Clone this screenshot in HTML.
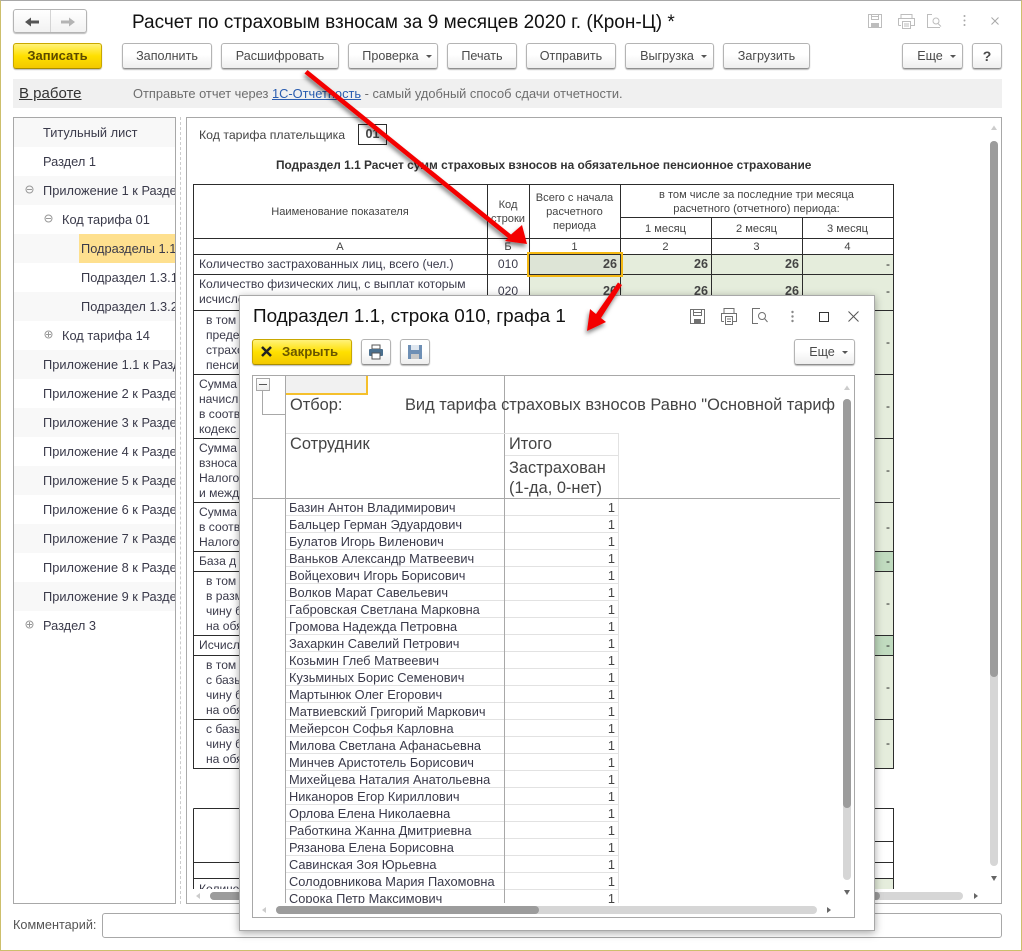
<!DOCTYPE html>
<html lang="ru"><head><meta charset="utf-8"><title>Расчет</title>
<style>
html,body{margin:0;padding:0}
body{width:1022px;height:951px;overflow:hidden;position:relative;background:#fff;font-family:"Liberation Sans",Arial,sans-serif;color:#333;font-size:12px}
div,span,a{box-sizing:border-box}
.a{position:absolute}
.t{position:absolute;white-space:nowrap;line-height:14px}
.b{position:absolute;height:26px;border:1px solid #b4b4b4;border-bottom-color:#8f8f8f;border-radius:3px;background:linear-gradient(#fff,#fff 45%,#eee);box-shadow:0 1px 1px #bbb;text-align:center;line-height:24px;font-size:12.6px;color:#4a4a4a;white-space:nowrap}
.dd{padding-left:8px}
.dd:after{content:"";display:inline-block;margin-left:7px;vertical-align:2px;border-left:3px solid transparent;border-right:3px solid transparent;border-top:3px solid #555}
.y{background:linear-gradient(#fff27a,#ffe000 50%,#f3c800);border-color:#c9a800;border-bottom-color:#a88c00;color:#5c4a00;font-weight:bold;font-size:13px}
.tr{position:absolute;left:14px;width:161px;height:29px;line-height:29px;font-size:12.8px;white-space:nowrap;overflow:hidden;color:#3a3a4a}
.alt{background:#f8f8f8}
.c{text-align:center}
.m{font-size:12.1px;color:#3a3a4a}
.h{font-size:11.1px;color:#444;text-align:center;line-height:14px}
.v{position:absolute;font-weight:bold;font-size:12.6px;line-height:14px;text-align:right;color:#444}
.d{position:absolute;left:886px;line-height:14px;color:#222}
.e{position:absolute;left:3px;margin-top:1px;white-space:nowrap;line-height:14px;font-size:12.8px;color:#3a3a4a}
.o{position:absolute;left:301px;width:28px;margin-top:1px;text-align:right;line-height:14px;font-size:12.8px;color:#444}
</style></head><body>

<!-- window frame -->
<div class="a" style="left:0;top:0;width:1022px;height:951px;border:1px solid #cdbf6c;border-top-color:#a8a8a8"></div>

<!-- nav -->
<div class="a" style="left:13px;top:9px;width:74px;height:24px;border:1px solid #b4b4b4;border-radius:3px;background:linear-gradient(#fff,#f2f2f2);box-shadow:0 1px 1px #bbb"></div>
<div class="a" style="left:50px;top:10px;width:1px;height:22px;background:#d4d4d4"></div>
<svg class="a" style="left:13px;top:9px" width="74" height="24"><path d="M12 13L18 8.500V11.500H26V14.500H18V17.500Z" fill="#555"/><path d="M62 13L56 8.500V11.500H48V14.500H56V17.500Z" fill="#b4b4b4"/></svg>
<div class="t" style="left:132px;top:12px;font-size:19px;line-height:22px;color:#111">Расчет по страховым взносам за 9 месяцев 2020 г. (Крон-Ц) *</div>

<!-- window icons -->
<svg class="a" style="left:860px;top:10px" width="150" height="24" fill="none" stroke="#bdbdbd" stroke-width="1">
<path d="M8.500 4.500H21.500V17.500H8.500Z"/><path d="M11.500 4.500V9.500H18.500V4.500M11.500 6.500H18.500"/><rect x="11" y="13" width="8" height="4" fill="#bdbdbd" stroke="none"/>
<path d="M41 8.500V4.500H52V8.500M38.500 15.500V8.500H54.500V15.500H51M41 15.500H38.500"/><path d="M42.500 11.500H50.500V18.500H42.500ZM44 14H49M44 16H49"/>
<path d="M72 4.500H67.500V17.500H80"/><circle cx="76" cy="11" r="3"/><path d="M78 13.500L81 16.500"/>
<circle cx="104.500" cy="6" r="1" fill="#a8a8a8" stroke="none"/><circle cx="104.500" cy="10.500" r="1" fill="#a8a8a8" stroke="none"/><circle cx="104.500" cy="15" r="1" fill="#a8a8a8" stroke="none"/>
<path d="M131.500 7.500L138.500 14.500M138.500 7.500L131.500 14.500" stroke="#a8a8a8"/>
</svg>

<!-- toolbar -->
<div class="b y" style="left:13px;top:43px;width:89px">Записать</div>
<div class="b" style="left:122px;top:43px;width:90px">Заполнить</div>
<div class="b" style="left:221px;top:43px;width:118px">Расшифровать</div>
<div class="b dd" style="left:348px;top:43px;width:90px">Проверка</div>
<div class="b" style="left:447px;top:43px;width:70px">Печать</div>
<div class="b" style="left:526px;top:43px;width:90px">Отправить</div>
<div class="b dd" style="left:625px;top:43px;width:89px">Выгрузка</div>
<div class="b" style="left:723px;top:43px;width:87px">Загрузить</div>
<div class="b dd" style="left:902px;top:43px;width:61px">Еще</div>
<div class="b" style="left:972px;top:43px;width:30px;font-weight:bold;font-size:14px">?</div>

<!-- status -->
<div class="a" style="left:13px;top:79px;width:989px;height:29px;background:#f0f0f0"></div>
<div class="t" style="left:19px;top:87px;font-size:15px;text-decoration:underline;color:#333">В работе</div>
<div class="t" style="left:133px;top:87px;font-size:12.850px;color:#6e6e6e">Отправьте отчет через <span style="color:#2a5db0;text-decoration:underline">1С-Отчетность</span> - самый удобный способ сдачи отчетности.</div>

<!-- tree -->
<div class="a" style="left:13px;top:117px;width:163px;height:787px;border:1px solid #a8a8a8;background:#fff;overflow:hidden">
<div class="tr alt" style="left:0;top:0;padding-left:29px">Титульный лист</div>
<div class="tr" style="left:0;top:29px;padding-left:29px">Раздел 1</div>
<div class="tr alt" style="left:0;top:58px;padding-left:29px">Приложение 1 к Разделу 1</div>
<div class="tr" style="left:0;top:87px;padding-left:48px">Код тарифа 01</div>
<div class="tr alt" style="left:0;top:116px"></div>
<div class="tr" style="left:65px;top:116px;width:96px;background:#fee08f;padding-left:2px">Подразделы 1.1</div>
<div class="tr" style="left:0;top:145px;padding-left:67px">Подраздел 1.3.1</div>
<div class="tr alt" style="left:0;top:174px;padding-left:67px">Подраздел 1.3.2</div>
<div class="tr" style="left:0;top:203px;padding-left:48px">Код тарифа 14</div>
<div class="tr alt" style="left:0;top:232px;padding-left:29px">Приложение 1.1 к Разделу 1</div>
<div class="tr" style="left:0;top:261px;padding-left:29px">Приложение 2 к Разделу 1</div>
<div class="tr alt" style="left:0;top:290px;padding-left:29px">Приложение 3 к Разделу 1</div>
<div class="tr" style="left:0;top:319px;padding-left:29px">Приложение 4 к Разделу 1</div>
<div class="tr alt" style="left:0;top:348px;padding-left:29px">Приложение 5 к Разделу 1</div>
<div class="tr" style="left:0;top:377px;padding-left:29px">Приложение 6 к Разделу 1</div>
<div class="tr alt" style="left:0;top:406px;padding-left:29px">Приложение 7 к Разделу 1</div>
<div class="tr" style="left:0;top:435px;padding-left:29px">Приложение 8 к Разделу 1</div>
<div class="tr alt" style="left:0;top:464px;padding-left:29px">Приложение 9 к Разделу 1</div>
<div class="tr" style="left:0;top:493px;padding-left:29px">Раздел 3</div>
<svg class="a" style="left:0;top:0" width="161" height="520" fill="none" stroke="#999">
<circle cx="15.500" cy="71.500" r="3.500"/><path d="M13 71.500H18"/>
<circle cx="34.500" cy="100.500" r="3.500"/><path d="M32 100.500H37"/>
<circle cx="34.500" cy="216.500" r="3.500"/><path d="M32 216.500H37M34.500 214V219"/>
<circle cx="15.500" cy="506.500" r="3.500"/><path d="M13 506.500H18M15.500 504V509"/>
</svg>
</div>
<div class="a" style="left:180px;top:117px;width:1px;height:787px;border-left:1px dashed #ccc"></div>

<!-- main pane -->
<div class="a" style="left:186px;top:117px;width:816px;height:787px;border:1px solid #a8a8a8;background:#fff"></div>
<div class="a" id="sheet" style="left:187px;top:118px;width:800px;height:771px;overflow:hidden">
 <div class="a" style="left:-187px;top:-118px;width:1022px;height:951px">
  <svg class="a" style="left:0;top:0" width="1022" height="951" shape-rendering="crispEdges">
   <rect x="529" y="254" width="364" height="514" fill="#e5eddc"/>
   <rect x="529" y="551" width="364" height="20" fill="#c0dbbf"/>
   <rect x="529" y="635" width="364" height="20" fill="#c0dbbf"/>
   <rect x="529" y="254" width="91" height="20" fill="#dde4d6"/>
   <rect x="529" y="878" width="364" height="12" fill="#e5eddc"/>
   <g stroke="#2c2c2c" stroke-width="1" fill="none">
    <path d="M193.500 184.500H893.500V768.500H193.500Z"/>
    <path d="M193 238.500H893M193 254.500H893M193 274.500H893M193 310.500H893M193 374.500H893M193 438.500H893M193 502.500H893M193 551.500H893M193 571.500H893M193 635.500H893M193 655.500H893M193 719.500H893"/>
    <path d="M620 217.500H893"/>
    <path d="M487.500 184V768M529.500 184V768M620.500 184V768M711.500 217V768M802.500 217V768"/>
    <path d="M193.500 808.500H893.500V890M193.500 808.500V890M193 862.500H893M193 878.500H893M760 841.500H893"/>
   </g>
   <rect x="528" y="253" width="94" height="23" fill="none" stroke="#f5b914" stroke-width="2"/>
  </svg>
  <div class="t" style="left:199px;top:128px;font-size:12.300px;color:#444">Код тарифа плательщика</div>
  <div class="a" style="left:358px;top:124px;width:29px;height:21px;border:1px solid #2c2c2c;text-align:center;line-height:19px;font-weight:bold;font-size:12.600px;color:#444">01</div>
  <div class="t" style="left:276px;top:158px;font-weight:bold;font-size:11.900px;color:#333">Подраздел 1.1 Расчет сумм страховых взносов на обязательное пенсионное страхование</div>

  <div class="t h" style="left:193px;width:294px;top:205px">Наименование показателя</div>
  <div class="t h" style="left:487px;width:42px;top:198px">Код<br><span style="line-height:14px">строки</span></div>
  <div class="t h" style="left:529px;width:91px;top:191px">Всего с начала<br>расчетного<br>периода</div>
  <div class="t h" style="left:620px;width:273px;top:188px">в том числе за последние три месяца<br>расчетного (отчетного) периода:</div>
  <div class="t h" style="left:620px;width:91px;top:222px">1 месяц</div>
  <div class="t h" style="left:711px;width:91px;top:222px">2 месяц</div>
  <div class="t h" style="left:802px;width:91px;top:222px">3 месяц</div>
  <div class="t h" style="left:193px;width:294px;top:240px">А</div>
  <div class="t h" style="left:487px;width:42px;top:240px">Б</div>
  <div class="t h" style="left:529px;width:91px;top:240px">1</div>
  <div class="t h" style="left:620px;width:91px;top:240px">2</div>
  <div class="t h" style="left:711px;width:91px;top:240px">3</div>
  <div class="t h" style="left:802px;width:91px;top:240px">4</div>

  <div class="t m" style="left:199px;top:257px">Количество застрахованных лиц, всего (чел.)</div>
  <div class="t m" style="left:487px;width:42px;top:257px;text-align:center">010</div>
  <div class="t m" style="left:199px;top:277px;line-height:14.500px">Количество физических лиц, с выплат которым<br>исчислены страховые взносы</div>
  <div class="t m" style="left:487px;width:42px;top:284px;text-align:center">020</div>
  <div class="v" style="left:529px;width:88px;top:257px">26</div><div class="v" style="left:620px;width:88px;top:257px">26</div><div class="v" style="left:711px;width:88px;top:257px">26</div>
  <div class="v" style="left:529px;width:88px;top:284px">26</div><div class="v" style="left:620px;width:88px;top:284px">26</div><div class="v" style="left:711px;width:88px;top:284px">26</div>
  <div class="d" style="top:257px">-</div><div class="d" style="top:284px">-</div><div class="d" style="top:335px">-</div><div class="d" style="top:399px">-</div><div class="d" style="top:463px">-</div><div class="d" style="top:520px">-</div><div class="d" style="top:554px">-</div><div class="d" style="top:596px">-</div><div class="d" style="top:638px">-</div><div class="d" style="top:680px">-</div><div class="d" style="top:736px">-</div>

  <div class="t m" style="left:206px;top:313px;line-height:15px">в том<br>преде<br>страхо<br>пенси</div>
  <div class="t m" style="left:199px;top:377px;line-height:15px">Сумма<br>начисл<br>в соотв<br>кодекс</div>
  <div class="t m" style="left:199px;top:441px;line-height:15px">Сумма<br>взноса<br>Налого<br>и межд</div>
  <div class="t m" style="left:199px;top:505px;line-height:15px">Сумма<br>в соотв<br>Налого</div>
  <div class="t m" style="left:199px;top:554px">База д</div>
  <div class="t m" style="left:206px;top:574px;line-height:15px">в том<br>в разм<br>чину б<br>на обя</div>
  <div class="t m" style="left:199px;top:638px">Исчисл</div>
  <div class="t m" style="left:206px;top:658px;line-height:15px">в том<br>с базы<br>чину б<br>на обя</div>
  <div class="t m" style="left:206px;top:722px;line-height:15px">с базы<br>чину б<br>на обя</div>
  <div class="t m" style="left:199px;top:882px">Количество</div>
 </div>
</div>

<!-- main scrollbars -->
<svg class="a" style="left:0;top:0" width="1022" height="951">
 <rect x="990" y="141" width="8" height="725" rx="4" fill="#d6d6d6"/>
 <rect x="990" y="141" width="8" height="536" rx="4" fill="#9c9c9c"/>
 <path d="M991 130L994 125.500L997 130Z" fill="#ccc"/>
 <path d="M991 876L994 881L997 876Z" fill="#666"/>
 <rect x="210" y="892" width="753" height="8" rx="4" fill="#d6d6d6"/>
 <rect x="210" y="892" width="670" height="8" rx="4" fill="#9c9c9c"/>
 <path d="M200 893L196 896L200 899Z" fill="#ccc"/>
 <path d="M974 893L978 896L974 899Z" fill="#666"/>
</svg>

<!-- comment -->
<div class="t" style="left:13px;top:918px;font-size:12.700px;color:#555">Комментарий:</div>
<div class="a" style="left:102px;top:913px;width:900px;height:25px;border:1px solid #a8a8a8;border-radius:3px;background:#fff"></div>

<!-- modal -->
<div class="a" style="left:239px;top:295px;width:636px;height:636px;background:#fff;border:1px solid #a8a8a8;box-shadow:0 2px 8px rgba(0,0,0,.35)"></div>
<div class="t" style="left:253px;top:306px;font-size:18.900px;line-height:22px;color:#111">Подраздел 1.1, строка 010, графа 1</div>
<svg class="a" style="left:680px;top:300px" width="185" height="35" fill="none" stroke="#707070" stroke-width="1">
 <path d="M10.500 9.500H24.500V23.500H10.500Z"/><path d="M13.500 9.500V15.500H21.500V9.500M13.500 12.500H21.500"/><rect x="14" y="19" width="7" height="4" fill="#707070" stroke="none"/>
 <path d="M44 13.500V8.500H54V13.500M41.500 21.500V13.500H56.500V21.500H53M44 21.500H41.500"/><path d="M45.500 16.500H52.500V24.500H45.500ZM47 19H51M47 21.500H51"/>
 <path d="M76 8.500H72.500V23.500H78"/><path d="M76 8.500H80"/><circle cx="82" cy="16" r="3.500"/><path d="M84.500 18.500L87.500 22"/>
 <circle cx="112.500" cy="12" r="1.200" fill="#888" stroke="none"/><circle cx="112.500" cy="16.500" r="1.200" fill="#888" stroke="none"/><circle cx="112.500" cy="21" r="1.200" fill="#888" stroke="none"/>
 <rect x="139.500" y="12.500" width="9" height="9" stroke="#333"/>
 <path d="M168.500 11.500L178.500 21.500M178.500 11.500L168.500 21.500" stroke="#555"/>
</svg>
<div class="b y" style="left:252px;top:339px;width:100px;text-align:left;padding-left:29px;color:#6a5600;font-size:13.200px">Закрыть</div>
<svg class="a" style="left:252px;top:339px" width="30" height="26"><path d="M10 8L19 17M19 8L10 17" stroke="#222" stroke-width="2.500"/></svg>
<div class="b" style="left:361px;top:339px;width:30px"></div>
<svg class="a" style="left:361px;top:339px" width="30" height="26"><path d="M11 6H19V10H11Z" fill="none" stroke="#555"/><rect x="8" y="10" width="14" height="7" rx="1" fill="#4a6f8e"/><rect x="11" y="14" width="8" height="6" fill="#fff" stroke="#555"/></svg>
<div class="b" style="left:400px;top:339px;width:30px"></div>
<svg class="a" style="left:400px;top:339px" width="30" height="26"><rect x="8" y="6" width="14" height="14" fill="#6e8fb5"/><rect x="11" y="6" width="8" height="5" fill="#dfe7f0"/><rect x="11" y="15" width="8" height="5" fill="#c8c8c8"/></svg>
<div class="b dd" style="left:794px;top:339px;width:61px">Еще</div>

<!-- modal grid -->
<div class="a" style="left:252px;top:375px;width:603px;height:543px;border:1px solid #a8a8a8;background:#fff"></div>
<div class="a" style="left:253px;top:376px;width:587px;height:527px;overflow:hidden">
 <div class="a" style="left:33px;top:0;width:80px;height:18px;background:#f1f1f1"></div>
 <div class="a" style="left:33px;top:0;width:82px;height:19px;border-right:2px solid #f5c02c;border-bottom:2px solid #f5c02c"></div>
 <div class="a" style="left:3px;top:2px;width:14px;height:13px;border:1px solid #a8a8a8;background:linear-gradient(#fff,#eee)"></div>
 <div class="a" style="left:6px;top:8px;width:8px;height:1px;background:#555"></div>
 <div class="a" style="left:9px;top:15px;width:23px;height:24px;border-left:1px solid #a8a8a8;border-bottom:1px solid #a8a8a8"></div>
 <div class="a" style="left:32px;top:0;width:1px;height:527px;background:#a8a8a8"></div>
 <div class="a" style="left:251px;top:0;width:1px;height:527px;background:#a8a8a8"></div>
 <div class="a" style="left:0;top:122px;width:587px;height:1px;background:#a8a8a8"></div>
 <div class="t" style="left:37px;top:20px;font-size:16.400px;line-height:18px;color:#444">Отбор:</div>
 <div class="t" style="left:152px;top:20px;font-size:16.400px;line-height:18px;color:#444">Вид тарифа страховых взносов Равно "Основной тариф</div>
 <div class="a" style="left:33px;top:57px;width:333px;height:1px;background:#e2e2e2"></div>
 <div class="a" style="left:252px;top:79px;width:114px;height:1px;background:#e2e2e2"></div>
 <div class="a" style="left:365px;top:57px;width:1px;height:65px;background:#e2e2e2"></div>
 <div class="t" style="left:37px;top:59px;font-size:16.400px;line-height:18px;color:#444">Сотрудник</div>
 <div class="t" style="left:256px;top:59px;font-size:16.400px;line-height:18px;color:#444">Итого</div>
 <div class="t" style="left:256px;top:82px;font-size:16.400px;line-height:20px;color:#444">Застрахован<br>(1-да, 0-нет)</div>
 <div class="a" style="left:33px;top:123px;width:333px;height:404px;background:repeating-linear-gradient(#fff 0,#fff 16px,#e2e2e2 16px,#e2e2e2 17px)">
  <div class="a" style="left:332px;top:0;width:1px;height:404px;background:#e2e2e2"></div>
  <div class="a" style="left:218px;top:0;width:1px;height:404px;background:#a8a8a8"></div>
  <div class="a" style="left:0;top:0;width:333px;height:404px;overflow:hidden">
  <div class="e" style="top:1px">Базин Антон Владимирович</div><div class="o" style="top:1px">1</div>
  <div class="e" style="top:18px">Бальцер Герман Эдуардович</div><div class="o" style="top:18px">1</div>
  <div class="e" style="top:35px">Булатов Игорь Виленович</div><div class="o" style="top:35px">1</div>
  <div class="e" style="top:52px">Ваньков Александр Матвеевич</div><div class="o" style="top:52px">1</div>
  <div class="e" style="top:69px">Войцехович Игорь Борисович</div><div class="o" style="top:69px">1</div>
  <div class="e" style="top:86px">Волков Марат Савельевич</div><div class="o" style="top:86px">1</div>
  <div class="e" style="top:103px">Габровская Светлана Марковна</div><div class="o" style="top:103px">1</div>
  <div class="e" style="top:120px">Громова Надежда Петровна</div><div class="o" style="top:120px">1</div>
  <div class="e" style="top:137px">Захаркин Савелий Петрович</div><div class="o" style="top:137px">1</div>
  <div class="e" style="top:154px">Козьмин Глеб Матвеевич</div><div class="o" style="top:154px">1</div>
  <div class="e" style="top:171px">Кузьминых Борис Семенович</div><div class="o" style="top:171px">1</div>
  <div class="e" style="top:188px">Мартынюк Олег Егорович</div><div class="o" style="top:188px">1</div>
  <div class="e" style="top:205px">Матвиевский Григорий Маркович</div><div class="o" style="top:205px">1</div>
  <div class="e" style="top:222px">Мейерсон Софья Карловна</div><div class="o" style="top:222px">1</div>
  <div class="e" style="top:239px">Милова Светлана Афанасьевна</div><div class="o" style="top:239px">1</div>
  <div class="e" style="top:256px">Минчев Аристотель Борисович</div><div class="o" style="top:256px">1</div>
  <div class="e" style="top:273px">Михейцева Наталия Анатольевна</div><div class="o" style="top:273px">1</div>
  <div class="e" style="top:290px">Никаноров Егор Кириллович</div><div class="o" style="top:290px">1</div>
  <div class="e" style="top:307px">Орлова Елена Николаевна</div><div class="o" style="top:307px">1</div>
  <div class="e" style="top:324px">Работкина Жанна Дмитриевна</div><div class="o" style="top:324px">1</div>
  <div class="e" style="top:341px">Рязанова Елена Борисовна</div><div class="o" style="top:341px">1</div>
  <div class="e" style="top:358px">Савинская Зоя Юрьевна</div><div class="o" style="top:358px">1</div>
  <div class="e" style="top:375px">Солодовникова Мария Пахомовна</div><div class="o" style="top:375px">1</div>
  <div class="e" style="top:392px">Сорока Петр Максимович</div><div class="o" style="top:392px">1</div>
  </div>
 </div>
</div>

<!-- modal scrollbars & arrows -->
<svg class="a" style="left:0;top:0" width="1022" height="951">
 <rect x="843" y="399" width="8" height="481" rx="4" fill="#d6d6d6"/>
 <rect x="843" y="399" width="8" height="409" rx="4" fill="#9c9c9c"/>
 <path d="M844 390L847 385.500L850 390Z" fill="#ccc"/>
 <path d="M844 890L847 895L850 890Z" fill="#666"/>
 <rect x="276" y="906" width="541" height="8" rx="4" fill="#d6d6d6"/>
 <rect x="276" y="906" width="263" height="8" rx="4" fill="#9c9c9c"/>
 <path d="M266 907L262 910L266 913Z" fill="#ccc"/>
 <path d="M827 907L831 910L827 913Z" fill="#666"/>
 <defs><filter id="s" x="-20%" y="-20%" width="150%" height="150%"><feDropShadow dx="-1" dy="3" stdDeviation="2" flood-color="#000" flood-opacity=".5"/></filter></defs>
 <g filter="url(#s)" fill="#f40000">
  <path d="M307.500 70L511 234.500L522 225L527 244L505 241L508 238L304.500 73.500Z"/>
  <path d="M618 282.500L622 285L601 318L606 322L587 331L590 309L596 314Z"/>
 </g>
</svg>
</body></html>
